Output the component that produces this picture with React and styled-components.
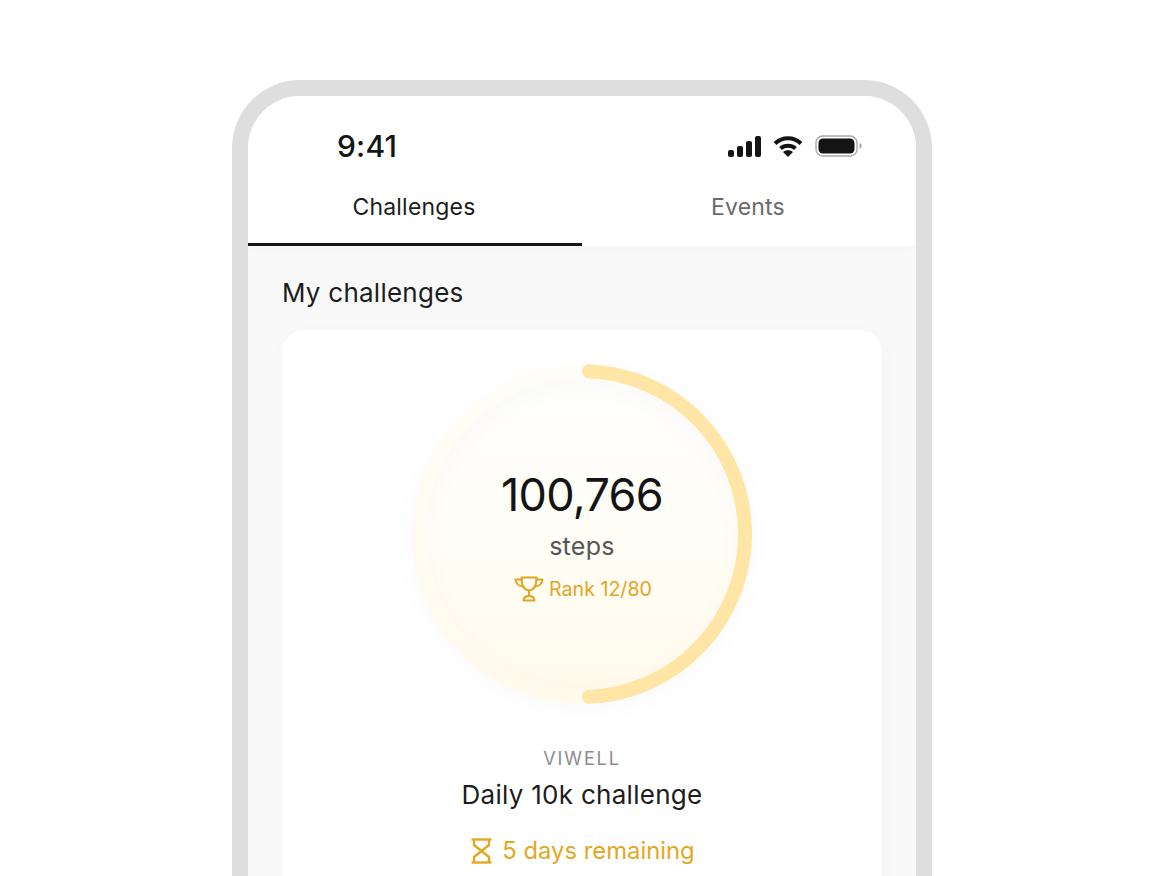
import React from 'react'
import styled, { createGlobalStyle } from 'styled-components'

const GlobalStyle = createGlobalStyle`
    html, body {
        margin: 0;
        height: 100%;
        background: white;
        overflow: hidden;
    }
    body {
        font-family: "Inter", "Liberation Sans", sans-serif;
        color: #1a1a1a;
    }
`

const Page = styled.div`
    width: 1168px;
    height: 876px;
    overflow: hidden;
    padding-top: 80px;
    box-sizing: border-box;
`

const Phone = styled.div`
    width: 700px;
    height: 900px;
    margin-left: 232px;
    box-sizing: border-box;
    border: 16px solid #dedede;
    border-bottom: none;
    border-radius: 68px 68px 0 0;
    background: #f9f9f9;
    overflow: hidden;
`

const Header = styled.div`
    background: white;
    box-shadow: 0 5px 14px rgba(0, 0, 0, 0.02);
    position: relative;
`

const StatusBar = styled.div`
    height: 92px;
    box-sizing: border-box;
    padding: 32px 54px 0 89px;
    display: flex;
    justify-content: space-between;
    align-items: flex-start;
`

const Time = styled.div`
    font-size: 30px;
    line-height: 36px;
    font-weight: 500;
    letter-spacing: 0.2px;
    color: #141414;
`

const StatusIcons = styled.div`
    display: flex;
    align-items: center;
    gap: 12px;
    height: 36px;
`

const Tabs = styled.div`
    display: grid;
    grid-template-columns: 334px 334px;
    height: 58px;
`

const Tab = styled.div`
    display: flex;
    justify-content: center;
    align-items: flex-start;
    padding: 4px 2px 0 0;
    box-sizing: border-box;
    font-size: 23px;
    line-height: 30px;
    letter-spacing: 0.2px;
    color: ${p => (p.$active ? '#1c1c1c' : '#6a6a6a')};
    border-bottom: 3px solid ${p => (p.$active ? '#161616' : 'transparent')};
`

const Content = styled.div`
    padding: 29px 34px 0;
`

const SectionTitle = styled.div`
    font-size: 26px;
    line-height: 35px;
    letter-spacing: 0.25px;
    color: #1d1d1d;
    margin-bottom: 20px;
`

const Card = styled.div`
    width: 600px;
    height: 640px;
    box-sizing: border-box;
    background: white;
    border-radius: 22px;
    box-shadow: 0 4px 24px rgba(0, 0, 0, 0.02);
    padding-top: 34px;
    display: flex;
    flex-direction: column;
    align-items: center;
`

const RingWrap = styled.div`
    width: 340px;
    height: 340px;
    display: grid;
    justify-items: center;
    & > * {
        grid-area: 1 / 1;
    }
`

const Disc = styled.div`
    width: 316px;
    height: 316px;
    margin-top: 12px;
    border-radius: 50%;
    background: linear-gradient(180deg, #fefefe 0%, #fffdf6 50%, #fffaec 100%);
`

const RingSvg = styled.svg`
    display: block;
    filter: drop-shadow(0 6px 10px rgba(0, 0, 0, 0.025));
`

const RingText = styled.div`
    display: flex;
    flex-direction: column;
    align-items: center;
    padding-top: 101px;
`

const Steps = styled.div`
    font-size: 45px;
    line-height: 60px;
    color: #141414;
    letter-spacing: -0.7px;
`

const StepsLabel = styled.div`
    font-size: 25px;
    line-height: 32px;
    letter-spacing: 0.3px;
    color: #555;
    margin-top: 5px;
`

const Rank = styled.div`
    display: flex;
    align-items: center;
    gap: 5px;
    font-size: 19.6px;
    line-height: 28px;
    color: #e3a51f;
    margin-top: 13px;
    margin-left: 2px;
`

const Org = styled.div`
    font-size: 18px;
    line-height: 24px;
    letter-spacing: 1.9px;
    color: #8c8c8c;
    margin-top: 43px;
`

const ChallengeName = styled.div`
    font-size: 26px;
    line-height: 34px;
    letter-spacing: 0.28px;
    color: #1d1d1d;
    margin-top: 7px;
`

const Remaining = styled.div`
    display: flex;
    align-items: center;
    gap: 10px;
    font-size: 23.8px;
    line-height: 32px;
    color: #e3a823;
    margin-top: 23px;
    margin-left: 2px;
`

const Signal = () => (
    <svg width="33" height="21" viewBox="0 0 33 21">
        <rect x="0" y="14" width="6" height="7" rx="2" fill="#141414" />
        <rect x="9" y="10" width="6" height="11" rx="2" fill="#141414" />
        <rect x="18" y="5" width="6" height="16" rx="2" fill="#141414" />
        <rect x="27" y="0" width="6" height="21" rx="2" fill="#141414" />
    </svg>
)

const Wifi = () => (
    <svg width="30" height="22" viewBox="0 0 30 22" fill="none">
        <path d="M2 8.5C9.5 1.5 20.5 1.5 28 8.5" stroke="#141414" strokeWidth="4" />
        <path d="M7.5 13.5C11.8 9.8 18.2 9.8 22.5 13.5" stroke="#141414" strokeWidth="4" />
        <path d="M10 17C12.6 14.8 17.4 14.8 20 17L15 22Z" fill="#141414" />
    </svg>
)

const Battery = () => (
    <svg width="47" height="22" viewBox="0 0 47 22" fill="none">
        <rect x="1" y="1" width="41" height="20" rx="6.5" stroke="#a8a8a8" strokeWidth="1.4" />
        <rect x="3.5" y="3.5" width="36" height="15" rx="4.5" fill="#141414" />
        <path d="M44.5 8C46 8.5 46.6 9.6 46.6 11C46.6 12.4 46 13.5 44.5 14Z" fill="#a8a8a8" />
    </svg>
)

const Trophy = () => (
    <svg width="30" height="26" viewBox="0 0 30 26" fill="none" stroke="#e3a51f" strokeWidth="2" strokeLinejoin="round" strokeLinecap="round">
        <path d="M7.5 1.5H22.5C22.5 9 20.5 14 15 14.5C9.5 14 7.5 9 7.5 1.5Z" />
        <path d="M7.7 3.5H1.5C2 7.5 4.5 10 8.8 10.6" />
        <path d="M22.3 3.5H28.5C28 7.5 25.5 10 21.2 10.6" />
        <path d="M15 14.5V20" />
        <path d="M9.5 24.5C9.8 21.5 12 20 15 20C18 20 20.2 21.5 20.5 24.5Z" />
    </svg>
)

const Hourglass = () => (
    <svg width="21" height="26" viewBox="0 0 21 26" fill="none" stroke="#e3a823" strokeWidth="2.4" strokeLinejoin="round">
        <path d="M0.5 1.5H20.5" />
        <path d="M0.5 24.5H20.5" />
        <path d="M3 1.5V7L10.5 13L3 19V24.5" />
        <path d="M18 1.5V7L10.5 13L18 19V24.5" />
    </svg>
)

export default function App() {
    return (
        <>
            <GlobalStyle />
            <Page>
                <Phone>
                    <Header>
                        <StatusBar>
                            <Time>9:41</Time>
                            <StatusIcons>
                                <Signal />
                                <Wifi />
                                <Battery />
                            </StatusIcons>
                        </StatusBar>
                        <Tabs>
                            <Tab $active>Challenges</Tab>
                            <Tab>Events</Tab>
                        </Tabs>
                    </Header>
                    <Content>
                        <SectionTitle>My challenges</SectionTitle>
                        <Card>
                            <RingWrap>
                                <Disc />
                                <RingSvg width="340" height="340" viewBox="0 0 340 340" fill="none">
                                    <defs>
                                        <linearGradient id="track" x1="0" y1="0" x2="0" y2="1">
                                            <stop offset="0" stopColor="#fffdf8" />
                                            <stop offset="1" stopColor="#fffaec" />
                                        </linearGradient>
                                    </defs>
                                    <circle cx="170" cy="170" r="163" stroke="url(#track)" strokeWidth="14" />
                                    <path d="M177 7.15A163 163 0 0 1 177 332.85" stroke="#ffe6a6" strokeWidth="14" strokeLinecap="round" />
                                </RingSvg>
                                <RingText>
                                    <Steps>100,766</Steps>
                                    <StepsLabel>steps</StepsLabel>
                                    <Rank>
                                        <Trophy />
                                        Rank 12/80
                                    </Rank>
                                </RingText>
                            </RingWrap>
                            <Org>VIWELL</Org>
                            <ChallengeName>Daily 10k challenge</ChallengeName>
                            <Remaining>
                                <Hourglass />
                                5 days remaining
                            </Remaining>
                        </Card>
                    </Content>
                </Phone>
            </Page>
        </>
    )
}
